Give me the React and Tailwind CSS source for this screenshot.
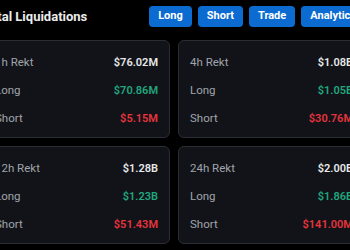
const cards = [
  { label: '1h Rekt', total: '$76.02M', long: '$70.86M', short: '$5.15M' },
  { label: '4h Rekt', total: '$1.08B', long: '$1.05B', short: '$30.76M' },
  { label: '12h Rekt', total: '$1.28B', long: '$1.23B', short: '$51.43M' },
  { label: '24h Rekt', total: '$2.00B', long: '$1.86B', short: '$141.00M' },
];

function Row({ label, value, color }) {
  return (
    <div className="flex h-[28px] items-center justify-between">
      <span className="text-[11.5px] text-[#a0a4ab]">{label}</span>
      <span className={`text-[11px] font-semibold ${color}`}>{value}</span>
    </div>
  );
}

export default function App() {
  return (
    <div className="h-[250px] w-[350px] overflow-hidden bg-[#000000] font-['Roboto',sans-serif]">
      <div className="-ml-[17px] w-[382px]">
        {/* Header */}
        <div className="flex items-center justify-between pt-[6px]">
          <h1 className="text-[13px] font-bold text-[#ececec]">Total Liquidations</h1>
          <div className="flex gap-[6px]">
            {['Long', 'Short', 'Trade', 'Analytics'].map((b) => (
              <button
                key={b}
                className="h-[21px] rounded-[4px] bg-[#0b6bd0] px-[9px] text-[11px] font-bold text-white"
              >
                {b}
              </button>
            ))}
          </div>
        </div>

        {/* Cards */}
        <div className="mt-[13px] grid grid-cols-2 gap-[8px]">
          {cards.map((c) => (
            <div
              key={c.label}
              className="h-[98px] rounded-[6px] border border-[#2a2d33] bg-[#111318] px-[11px] pt-[8px]"
            >
              <Row label={c.label} value={c.total} color="text-[#e8e8e8]" />
              <Row label="Long" value={c.long} color="text-[#22a67e]" />
              <Row label="Short" value={c.short} color="text-[#e8333e]" />
            </div>
          ))}
        </div>
      </div>
    </div>
  );
}
